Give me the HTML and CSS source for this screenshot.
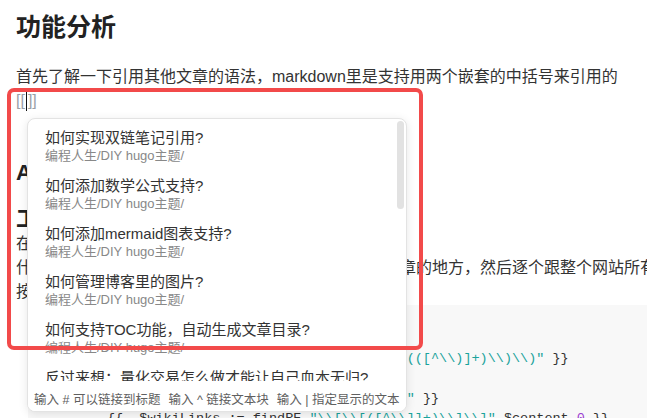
FILE: index.html
```html
<!DOCTYPE html>
<html lang="zh">
<head>
<meta charset="utf-8">
<title>功能分析</title>
<link rel="stylesheet" href="styles.css">
</head>
<body>
<main class="doc">
  <h1 class="h1">功能分析</h1>
  <p class="lead">首先了解一下引用其他文章的语法，markdown里是支持用两个嵌套的中括号来引用的<br><span class="typed">[[<span class="caret"></span>]]</span></p>
  <h2 class="h2">API 设计</h2>
  <h3 class="h3">工作原理</h3>
  <p class="para">在生成页面的时候处理双链。<br>什么时候会用到双链呢？首先要找出所有引用了其他文章的地方，然后逐个跟整个网站所有文章的标题进行匹配<br>按照匹配结果生成链接。</p>
  <pre class="code"><span class="ln">         {{- $content := .Content -}}</span>
<span class="ln">         {{- $blockReferences := findRE <span class="str">"\\(\\(([^\\)]+)\\)\\)"</span> }}</span>
<span class="ln">         {{- range $blockReferences }}</span>
<span class="ln">         {{- $id := replaceRE <span class="str">"^\\(\\(|\\)\\)$"</span> }}</span>
<span class="ln">         {{- $wikiLinks := findRE <span class="str">"\\[\\[([^\\]]+)\\]\\]"</span> $content <span class="num">0</span> }}</span></pre>
</main>

<div class="popup">
  <div class="list">
    <div class="item"><div class="title">如何实现双链笔记引用?</div><div class="sub">编程人生/DIY hugo主题/</div></div>
    <div class="item"><div class="title">如何添加数学公式支持?</div><div class="sub">编程人生/DIY hugo主题/</div></div>
    <div class="item"><div class="title">如何添加mermaid图表支持?</div><div class="sub">编程人生/DIY hugo主题/</div></div>
    <div class="item"><div class="title">如何管理博客里的图片?</div><div class="sub">编程人生/DIY hugo主题/</div></div>
    <div class="item"><div class="title">如何支持TOC功能，自动生成文章目录?</div><div class="sub">编程人生/DIY hugo主题/</div></div>
    <div class="item"><div class="title">反过来想：量化交易怎么做才能让自己血本无归?</div><div class="sub">投资理财/量化交易/</div></div>
  </div>
  <div class="foot">
    <span>输入 # 可以链接到标题</span>
    <span>输入 ^ 链接文本块</span>
    <span>输入 | 指定显示的文本</span>
  </div>
  <div class="thumb"></div>
</div>

<div class="annot"></div>
</body>
</html>
```
FILE: styles.css
```css
html, body {
  margin: 0;
  padding: 0;
  overflow: hidden;
  background: #fff;
}

body {
  position: relative;
  width: 647px;
  height: 418px;
  font-family: "Liberation Sans", "Noto Sans CJK SC", sans-serif;
  color: #333;
}

.doc {
  width: 1000px;
  padding: 10px 16px 0;
}

.h1 {
  margin: 0;
  font-size: 25px;
  line-height: 34px;
  font-weight: 700;
  color: #222;
}

.lead {
  margin: 21px 0 0;
  font-size: 16px;
  line-height: 24px;
}

.typed {
  color: #9aa0a8;
}

.caret {
  display: inline-block;
  width: 1px;
  height: 20px;
  margin: 0 1px;
  background: #111;
  vertical-align: -5px;
}

.h2 {
  margin: 45px 0 0;
  font-size: 22px;
  line-height: 30px;
  font-weight: 700;
  color: #222;
}

.h3 {
  margin: 18px 0 0;
  font-size: 22px;
  line-height: 26px;
  font-weight: 700;
  color: #222;
}

.para {
  margin: 0;
  font-size: 16px;
  line-height: 24px;
}

.code {
  margin: 1px 0 0 12px;
  padding: 24px 0 0 6px;
  background: #f8f8f8;
  font-family: "Liberation Mono", "DejaVu Sans Mono", monospace;
  font-size: 13.5px;
  line-height: 20px;
  color: #333;
}

.str {
  color: #1ba39c;
}

.num {
  color: #9b3fd1;
}

.popup {
  position: absolute;
  left: 27px;
  top: 118px;
  width: 380px;
  height: 294px;
  box-sizing: border-box;
  display: flex;
  flex-direction: column;
  background: #fff;
  border: 1px solid #e3e3e3;
  border-radius: 8px;
  box-shadow: 0 2px 10px rgba(0, 0, 0, 0.10);
  overflow: hidden;
}

.list {
  height: 262px;
  flex: none;
  overflow: hidden;
}

.item {
  padding: 9px 17px 3px;
}

.title {
  font-size: 15px;
  line-height: 20px;
  color: #333;
  white-space: nowrap;
}

.sub {
  font-size: 13px;
  line-height: 16px;
  color: #888;
  white-space: nowrap;
}

.foot {
  flex: 1;
  display: flex;
  align-items: center;
  gap: 8px;
  padding: 4px 0 0 6px;
  font-size: 12.5px;
  color: #606060;
  background: #fff;
  white-space: nowrap;
}

.thumb {
  position: absolute;
  top: 2px;
  right: 2px;
  width: 7px;
  height: 88px;
  border-radius: 4px;
  background: #e2e2e2;
}

.annot {
  position: absolute;
  left: 7px;
  top: 88px;
  width: 416px;
  height: 262px;
  box-sizing: border-box;
  border: 4px solid #f24a4a;
  border-radius: 7px;
  pointer-events: none;
}
```
